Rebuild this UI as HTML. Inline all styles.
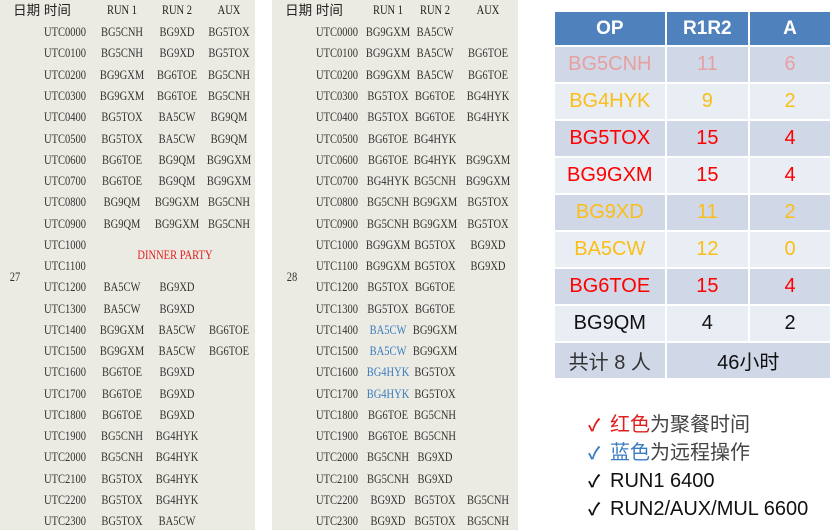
<!DOCTYPE html>
<html><head><meta charset="utf-8"><style>
*{margin:0;padding:0;box-sizing:border-box}
body{width:832px;height:530px;background:#fff;position:relative;overflow:hidden;font-family:"Liberation Serif","Noto Serif CJK SC",serif}
.p{position:absolute;top:0;height:530px;background:#ecebe3}
.r{position:absolute;left:0;width:100%;height:21px;font-size:12.5px;color:#333;line-height:21px}
.r span{position:absolute;text-align:center;width:56px;white-space:nowrap;transform:scaleX(.84)}
.h span{font-family:"Liberation Sans","Noto Sans CJK SC",sans-serif;font-size:13.5px;color:#222;transform:none}
.h span.s{font-family:"Liberation Serif",serif;font-size:12.5px;transform:scaleX(.84)}
.b{color:#3a7cc0}
.rt{position:absolute;left:553px;top:10px;border-collapse:collapse;font-family:"Liberation Sans","Noto Sans CJK SC",sans-serif;font-size:20px}
.rt td{border:2px solid #fff;text-align:center;height:37px;padding:0}
.rt tr.hd td{background:#4f81bd;color:#fff;font-weight:bold;height:35px;font-size:19px}
.rt tr.a td{background:#d0d8e8}
.rt tr.c td{background:#e9edf4}
.pk{color:#e6a0a0}.yl{color:#fbbd18}.rd{color:#f00}.bk{color:#111}
.lg{position:absolute;left:588px;font-family:"Liberation Sans","Noto Sans CJK SC",sans-serif;font-size:20px;line-height:28px;color:#111}
.lg i{font-style:normal;display:inline-block;width:22px;font-size:17px;font-weight:bold}
</style></head><body>

<div class="p" style="left:0;width:255px">
<div class="r h" style="top:0"><span style="left:12px;width:60px">日期 时间</span><span class="s" style="left:94px">RUN 1</span><span class="s" style="left:149px">RUN 2</span><span class="s" style="left:201px">AUX</span></div>
<div class="r" style="top:267px"><span style="left:-13px">27</span></div>
<div class="r" style="top:245px;color:#e02020"><span style="left:130px;width:90px">DINNER PARTY</span></div>
</div>

<div class="p" style="left:272px;width:246px">
<div class="r h" style="top:0"><span style="left:12px;width:60px">日期 时间</span><span class="s" style="left:88px">RUN 1</span><span class="s" style="left:135px">RUN 2</span><span class="s" style="left:188px">AUX</span></div>
<div class="r" style="top:267px"><span style="left:-8px">28</span></div>
</div>

<div style="position:absolute;left:0;top:0;width:255px">
<div class="r" style="top:22px"><span style="left:37px">UTC0000</span><span style="left:94px">BG5CNH</span><span style="left:149px">BG9XD</span><span style="left:201px">BG5TOX</span></div>
<div class="r" style="top:43px"><span style="left:37px">UTC0100</span><span style="left:94px">BG5CNH</span><span style="left:149px">BG9XD</span><span style="left:201px">BG5TOX</span></div>
<div class="r" style="top:64.5px"><span style="left:37px">UTC0200</span><span style="left:94px">BG9GXM</span><span style="left:149px">BG6TOE</span><span style="left:201px">BG5CNH</span></div>
<div class="r" style="top:86px"><span style="left:37px">UTC0300</span><span style="left:94px">BG9GXM</span><span style="left:149px">BG6TOE</span><span style="left:201px">BG5CNH</span></div>
<div class="r" style="top:107px"><span style="left:37px">UTC0400</span><span style="left:94px">BG5TOX</span><span style="left:149px">BA5CW</span><span style="left:201px">BG9QM</span></div>
<div class="r" style="top:128.5px"><span style="left:37px">UTC0500</span><span style="left:94px">BG5TOX</span><span style="left:149px">BA5CW</span><span style="left:201px">BG9QM</span></div>
<div class="r" style="top:150px"><span style="left:37px">UTC0600</span><span style="left:94px">BG6TOE</span><span style="left:149px">BG9QM</span><span style="left:201px">BG9GXM</span></div>
<div class="r" style="top:171px"><span style="left:37px">UTC0700</span><span style="left:94px">BG6TOE</span><span style="left:149px">BG9QM</span><span style="left:201px">BG9GXM</span></div>
<div class="r" style="top:192px"><span style="left:37px">UTC0800</span><span style="left:94px">BG9QM</span><span style="left:149px">BG9GXM</span><span style="left:201px">BG5CNH</span></div>
<div class="r" style="top:213.5px"><span style="left:37px">UTC0900</span><span style="left:94px">BG9QM</span><span style="left:149px">BG9GXM</span><span style="left:201px">BG5CNH</span></div>
<div class="r" style="top:235px"><span style="left:37px">UTC1000</span></div>
<div class="r" style="top:256px"><span style="left:37px">UTC1100</span></div>
<div class="r" style="top:277px"><span style="left:37px">UTC1200</span><span style="left:94px">BA5CW</span><span style="left:149px">BG9XD</span></div>
<div class="r" style="top:298.5px"><span style="left:37px">UTC1300</span><span style="left:94px">BA5CW</span><span style="left:149px">BG9XD</span></div>
<div class="r" style="top:320px"><span style="left:37px">UTC1400</span><span style="left:94px">BG9GXM</span><span style="left:149px">BA5CW</span><span style="left:201px">BG6TOE</span></div>
<div class="r" style="top:341px"><span style="left:37px">UTC1500</span><span style="left:94px">BG9GXM</span><span style="left:149px">BA5CW</span><span style="left:201px">BG6TOE</span></div>
<div class="r" style="top:362px"><span style="left:37px">UTC1600</span><span style="left:94px">BG6TOE</span><span style="left:149px">BG9XD</span></div>
<div class="r" style="top:383.5px"><span style="left:37px">UTC1700</span><span style="left:94px">BG6TOE</span><span style="left:149px">BG9XD</span></div>
<div class="r" style="top:405px"><span style="left:37px">UTC1800</span><span style="left:94px">BG6TOE</span><span style="left:149px">BG9XD</span></div>
<div class="r" style="top:426px"><span style="left:37px">UTC1900</span><span style="left:94px">BG5CNH</span><span style="left:149px">BG4HYK</span></div>
<div class="r" style="top:447px"><span style="left:37px">UTC2000</span><span style="left:94px">BG5CNH</span><span style="left:149px">BG4HYK</span></div>
<div class="r" style="top:468.5px"><span style="left:37px">UTC2100</span><span style="left:94px">BG5TOX</span><span style="left:149px">BG4HYK</span></div>
<div class="r" style="top:490px"><span style="left:37px">UTC2200</span><span style="left:94px">BG5TOX</span><span style="left:149px">BG4HYK</span></div>
<div class="r" style="top:511px"><span style="left:37px">UTC2300</span><span style="left:94px">BG5TOX</span><span style="left:149px">BA5CW</span></div>
</div>

<div style="position:absolute;left:272px;top:0;width:246px">
<div class="r" style="top:22px"><span style="left:37px">UTC0000</span><span style="left:88px">BG9GXM</span><span style="left:135px">BA5CW</span></div>
<div class="r" style="top:43px"><span style="left:37px">UTC0100</span><span style="left:88px">BG9GXM</span><span style="left:135px">BA5CW</span><span style="left:188px">BG6TOE</span></div>
<div class="r" style="top:64.5px"><span style="left:37px">UTC0200</span><span style="left:88px">BG9GXM</span><span style="left:135px">BA5CW</span><span style="left:188px">BG6TOE</span></div>
<div class="r" style="top:86px"><span style="left:37px">UTC0300</span><span style="left:88px">BG5TOX</span><span style="left:135px">BG6TOE</span><span style="left:188px">BG4HYK</span></div>
<div class="r" style="top:107px"><span style="left:37px">UTC0400</span><span style="left:88px">BG5TOX</span><span style="left:135px">BG6TOE</span><span style="left:188px">BG4HYK</span></div>
<div class="r" style="top:128.5px"><span style="left:37px">UTC0500</span><span style="left:88px">BG6TOE</span><span style="left:135px">BG4HYK</span></div>
<div class="r" style="top:150px"><span style="left:37px">UTC0600</span><span style="left:88px">BG6TOE</span><span style="left:135px">BG4HYK</span><span style="left:188px">BG9GXM</span></div>
<div class="r" style="top:171px"><span style="left:37px">UTC0700</span><span style="left:88px">BG4HYK</span><span style="left:135px">BG5CNH</span><span style="left:188px">BG9GXM</span></div>
<div class="r" style="top:192px"><span style="left:37px">UTC0800</span><span style="left:88px">BG5CNH</span><span style="left:135px">BG9GXM</span><span style="left:188px">BG5TOX</span></div>
<div class="r" style="top:213.5px"><span style="left:37px">UTC0900</span><span style="left:88px">BG5CNH</span><span style="left:135px">BG9GXM</span><span style="left:188px">BG5TOX</span></div>
<div class="r" style="top:235px"><span style="left:37px">UTC1000</span><span style="left:88px">BG9GXM</span><span style="left:135px">BG5TOX</span><span style="left:188px">BG9XD</span></div>
<div class="r" style="top:256px"><span style="left:37px">UTC1100</span><span style="left:88px">BG9GXM</span><span style="left:135px">BG5TOX</span><span style="left:188px">BG9XD</span></div>
<div class="r" style="top:277px"><span style="left:37px">UTC1200</span><span style="left:88px">BG5TOX</span><span style="left:135px">BG6TOE</span></div>
<div class="r" style="top:298.5px"><span style="left:37px">UTC1300</span><span style="left:88px">BG5TOX</span><span style="left:135px">BG6TOE</span></div>
<div class="r" style="top:320px"><span style="left:37px">UTC1400</span><span style="left:88px" class="b">BA5CW</span><span style="left:135px">BG9GXM</span></div>
<div class="r" style="top:341px"><span style="left:37px">UTC1500</span><span style="left:88px" class="b">BA5CW</span><span style="left:135px">BG9GXM</span></div>
<div class="r" style="top:362px"><span style="left:37px">UTC1600</span><span style="left:88px" class="b">BG4HYK</span><span style="left:135px">BG5TOX</span></div>
<div class="r" style="top:383.5px"><span style="left:37px">UTC1700</span><span style="left:88px" class="b">BG4HYK</span><span style="left:135px">BG5TOX</span></div>
<div class="r" style="top:405px"><span style="left:37px">UTC1800</span><span style="left:88px">BG6TOE</span><span style="left:135px">BG5CNH</span></div>
<div class="r" style="top:426px"><span style="left:37px">UTC1900</span><span style="left:88px">BG6TOE</span><span style="left:135px">BG5CNH</span></div>
<div class="r" style="top:447px"><span style="left:37px">UTC2000</span><span style="left:88px">BG5CNH</span><span style="left:135px">BG9XD</span></div>
<div class="r" style="top:468.5px"><span style="left:37px">UTC2100</span><span style="left:88px">BG5CNH</span><span style="left:135px">BG9XD</span></div>
<div class="r" style="top:490px"><span style="left:37px">UTC2200</span><span style="left:88px">BG9XD</span><span style="left:135px">BG5TOX</span><span style="left:188px">BG5CNH</span></div>
<div class="r" style="top:511px"><span style="left:37px">UTC2300</span><span style="left:88px">BG9XD</span><span style="left:135px">BG5TOX</span><span style="left:188px">BG5CNH</span></div>
</div>

<table class="rt">
<colgroup><col style="width:112px"><col style="width:84px"><col style="width:83px"></colgroup>
<tr class="hd"><td>OP</td><td>R1R2</td><td>A</td></tr>
<tr class="a pk"><td>BG5CNH</td><td>11</td><td>6</td></tr>
<tr class="c yl"><td>BG4HYK</td><td>9</td><td>2</td></tr>
<tr class="a rd"><td>BG5TOX</td><td>15</td><td>4</td></tr>
<tr class="c rd"><td>BG9GXM</td><td>15</td><td>4</td></tr>
<tr class="a yl"><td>BG9XD</td><td>11</td><td>2</td></tr>
<tr class="c yl"><td>BA5CW</td><td>12</td><td>0</td></tr>
<tr class="a rd"><td>BG6TOE</td><td>15</td><td>4</td></tr>
<tr class="c bk"><td>BG9QM</td><td>4</td><td>2</td></tr>
<tr class="a bk"><td style="color:#333">共计 8 人</td><td colspan="2">46小时</td></tr>
</table>

<div class="lg" style="top:411px"><i style="color:#e02020">✓</i><span style="color:#e02020">红色</span><span style="color:#444">为聚餐时间</span></div>
<div class="lg" style="top:439px"><i style="color:#3a7cc0">✓</i><span style="color:#3a7cc0">蓝色</span><span style="color:#444">为远程操作</span></div>
<div class="lg" style="top:467px"><i>✓</i>RUN1 6400</div>
<div class="lg" style="top:495px"><i>✓</i>RUN2/AUX/MUL 6600</div>
</body></html>
